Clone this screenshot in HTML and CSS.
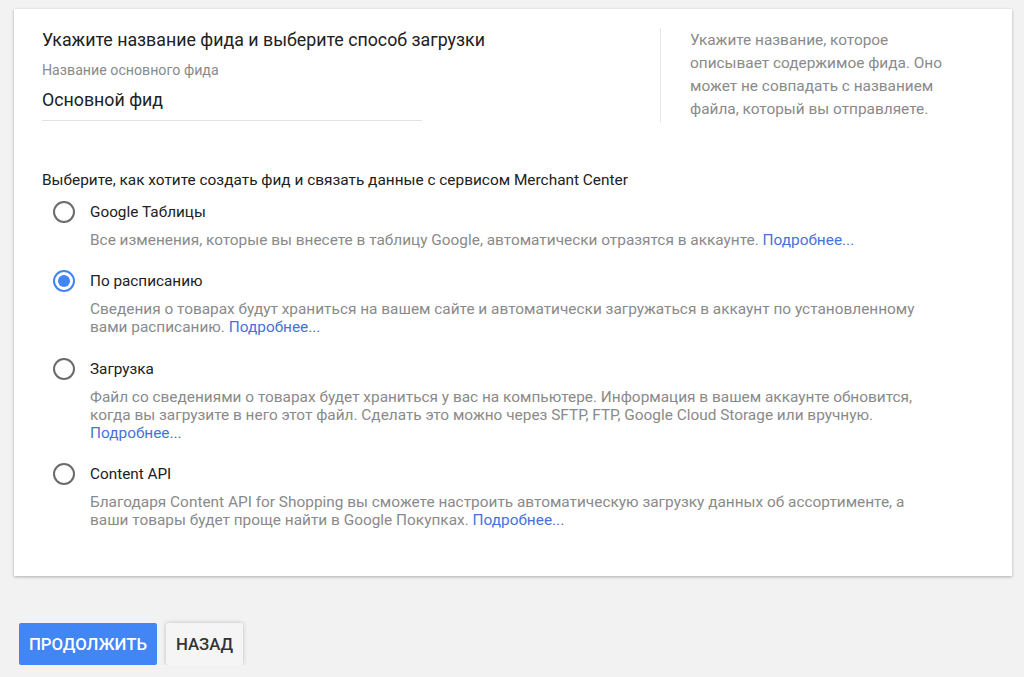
FILE: index.html
```html
<!DOCTYPE html>
<html lang="ru">
<head>
<meta charset="utf-8">
<title>Фид</title>
<link rel="stylesheet" href="styles.css">
</head>
<body>
<div class="page">
  <section class="card">
    <div class="top">
      <div class="left">
        <h2 class="title">Укажите название фида и выберите способ загрузки</h2>
        <div class="field-label">Название основного фида</div>
        <div class="field-input">Основной фид</div>
      </div>
      <div class="help">Укажите название, которое описывает содержимое фида. Оно может не совпадать с названием файла, который вы отправляете.</div>
    </div>

    <p class="question">Выберите, как хотите создать фид и связать данные с сервисом Merchant Center</p>

    <div class="options">
      <div class="option">
        <span class="radio"></span>
        <div class="option-body">
          <div class="option-label">Google Таблицы</div>
          <div class="option-desc">Все изменения, которые вы внесете в таблицу Google, автоматически отразятся в аккаунте. <a class="more" href="#">Подробнее...</a></div>
        </div>
      </div>
      <div class="option">
        <span class="radio checked"></span>
        <div class="option-body">
          <div class="option-label">По расписанию</div>
          <div class="option-desc">Сведения о товарах будут храниться на вашем сайте и автоматически загружаться в аккаунт по установленному вами расписанию. <a class="more" href="#">Подробнее...</a></div>
        </div>
      </div>
      <div class="option">
        <span class="radio"></span>
        <div class="option-body">
          <div class="option-label">Загрузка</div>
          <div class="option-desc">Файл со сведениями о товарах будет храниться у вас на компьютере. Информация в вашем аккаунте обновится, когда вы загрузите в него этот файл. Сделать это можно через SFTP, FTP, Google Cloud Storage или вручную. <a class="more" href="#">Подробнее...</a></div>
        </div>
      </div>
      <div class="option">
        <span class="radio"></span>
        <div class="option-body">
          <div class="option-label">Content API</div>
          <div class="option-desc">Благодаря Content API for Shopping вы сможете настроить автоматическую загрузку данных об ассортименте, а ваши товары будет проще найти в Google Покупках. <a class="more" href="#">Подробнее...</a></div>
        </div>
      </div>
    </div>
  </section>

  <div class="actions">
    <button class="btn btn-primary">Продолжить</button>
    <button class="btn btn-secondary">Назад</button>
  </div>
</div>
</body>
</html>
```

FILE: styles.css
```css
* { box-sizing: border-box; }

html, body {
  margin: 0;
  padding: 0;
  background: #f2f2f2;
  font-family: Roboto, "Liberation Sans", Arial, sans-serif;
  color: #212121;
}

.page {
  padding: 9px 12px 0 14px;
}

.card {
  width: 998px;
  background: #fff;
  box-shadow: 0 1px 3px rgba(0,0,0,0.28);
  padding: 19px 28px 47px 28px;
}

.top {
  display: flex;
  align-items: flex-start;
}

.left {
  width: 618px;
}

.title {
  margin: 0;
  font-size: 17.8px;
  font-weight: 400;
  line-height: 24px;
  color: #212121;
}

.field-label {
  margin-top: 10px;
  font-size: 14.2px;
  line-height: 16px;
  color: #8a8a8a;
}

.field-input {
  width: 380px;
  margin-top: 10px;
  font-size: 17.8px;
  line-height: 24px;
  padding-bottom: 8px;
  border-bottom: 1px solid #e3e3e3;
  color: #212121;
}

.help {
  border-left: 1px solid #e6e6e6;
  padding: 1px 0 2px 29px;
  width: 300px;
  font-size: 15.4px;
  line-height: 23px;
  color: #8a8a8a;
}

.question {
  margin: 47px 0 0 0;
  font-size: 15.4px;
  line-height: 20px;
  color: #212121;
}

.options {
  margin-top: 11px;
  display: flex;
  flex-direction: column;
  gap: 21.3px;
}

.option {
  display: flex;
  align-items: flex-start;
  padding-left: 11px;
}

.radio {
  flex: none;
  width: 22px;
  height: 22px;
  border: 2px solid #6b6b6b;
  border-radius: 50%;
  margin-right: 15px;
  position: relative;
}

.radio.checked {
  border-color: #4285f4;
}

.radio.checked::after {
  content: "";
  position: absolute;
  left: 3px;
  top: 3px;
  width: 12px;
  height: 12px;
  border-radius: 50%;
  background: #4285f4;
}

.option-label {
  font-size: 15.3px;
  line-height: 22px;
  color: #212121;
}

.option-desc {
  margin-top: 8px;
  max-width: 840px;
  font-size: 15.4px;
  line-height: 18px;
  color: #8a8a8a;
}

.more {
  color: #4672d9;
  text-decoration: none;
}

.actions {
  display: flex;
  gap: 9px;
  margin-top: 47px;
  padding-left: 5px;
}

.btn {
  height: 42px;
  border: none;
  border-radius: 2px;
  font-family: Roboto, "Liberation Sans", Arial, sans-serif;
  font-size: 16.8px;
  font-weight: 500;
  text-transform: uppercase;
  padding: 0;
  cursor: pointer;
}

.btn-primary {
  width: 138px;
  background: #4285f4;
  color: #fff;
}

.btn-secondary {
  width: 77px;
  background: #f5f5f5;
  color: #333;
  box-shadow: 0 0 4px rgba(0,0,0,0.22);
}
```
